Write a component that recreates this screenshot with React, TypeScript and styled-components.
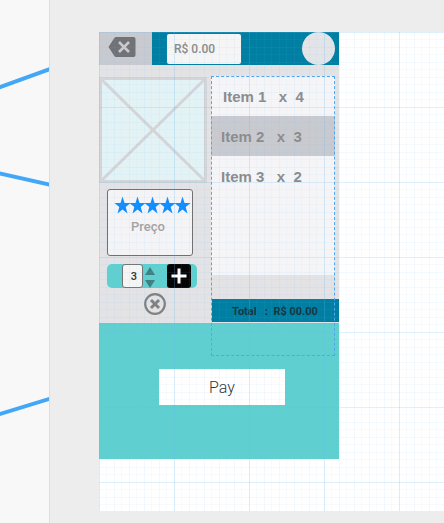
import React from "react";
import styled, { createGlobalStyle } from "styled-components";

const GlobalStyle = createGlobalStyle`
  *, *::before, *::after { box-sizing: border-box; }
  body { margin: 0; background: #ededed; font-family: Roboto, sans-serif; }
  button, input { font: inherit; margin: 0; padding: 0; border: 0; border-radius: 0; }
  button { cursor: pointer; background: none; }
  svg { display: block; }
`;

const Workspace = styled.div`
  display: flex;
  min-height: 100vh;
  overflow: hidden;
`;

const FlowStrip = styled.aside`
  flex: 0 0 50px;
  overflow: hidden;
  background: #f8f8f8;
  border-right: 1px solid #dedede;
`;

const Canvas = styled.main`
  flex: 1;
  min-width: 0;
  padding: 32px 0 12px 49px;
`;

const line = (alpha: number) => `rgba(100, 182, 240, ${alpha})`;

const Artboard = styled.div`
  position: relative;
  padding-bottom: 52px;
  background: #fff;

  &::after {
    content: "";
    position: absolute;
    inset: 0;
    pointer-events: none;
    background-image:
      linear-gradient(to right, ${line(0.18)} 1px, transparent 1px),
      linear-gradient(to bottom, ${line(0.14)} 1px, transparent 1px),
      linear-gradient(to right, ${line(0.08)} 1px, transparent 1px 7px, ${line(0.05)} 7px 8px, transparent 8px),
      linear-gradient(to bottom, ${line(0.08)} 1px, transparent 1px 7px, ${line(0.05)} 7px 8px, transparent 8px);
    background-size: 75px 75px, 75px 75px, 15px 15px, 15px 15px;
  }
`;

const Phone = styled.div`
  width: 100%;
  max-width: 240px;
  background: #e3e3e6;
`;

const Header = styled.header`
  display: flex;
  align-items: center;
  height: 33px;
  padding-right: 4px;
  background: #007fa3;
`;

const BackButton = styled.button`
  display: flex;
  align-items: center;
  align-self: stretch;
  width: 53px;
  padding: 0 0 3px 9px;
  background: #c9cad0;
`;

const BalanceInput = styled.input`
  width: 74px;
  height: 30px;
  margin-left: 15px;
  padding: 0 0 0 7px;
  border-radius: 2px;
  background: #f5f5f6;
  color: #8a8a8a;
  font-size: 12px;
  font-weight: 500;
`;

const Avatar = styled.button`
  width: 33px;
  height: 33px;
  margin-left: auto;
  border-radius: 50%;
  background: #e3e4e8;
`;

const Body = styled.section`
  display: grid;
  grid-template-columns: 112px 1fr;
`;

const ProductColumn = styled.div`
  display: flex;
  flex-direction: column;
  align-items: flex-start;
  padding: 12px 0 8px;
`;

const PriceCard = styled.div`
  width: 86px;
  height: 67px;
  margin: 6px 0 8px 8px;
  padding: 6px 0 0 6px;
  border: 1px solid #707070;
  border-radius: 3px;
  background: #f4f4f6;
`;

const PriceLabel = styled.div`
  margin-top: 4px;
  padding-right: 10px;
  text-align: center;
  color: #a3a3a3;
  font-size: 13px;
  font-weight: 500;
  line-height: 16px;
`;

const QuantityBar = styled.div`
  display: flex;
  align-items: center;
  width: 90px;
  height: 24px;
  margin: 0 0 5px 8px;
  padding: 0 6px 0 15px;
  border-radius: 5px;
  background: #5fd0cf;
`;

const QuantityInput = styled.input`
  width: 21px;
  height: 24px;
  padding-left: 3px;
  border: 1px solid #737373;
  border-radius: 3px;
  background: #f5f5f6;
  color: #333;
  text-align: center;
  font-size: 11px;
  font-weight: 500;
`;

const Stepper = styled.div`
  display: flex;
  flex-direction: column;
  gap: 5px;
  margin: 3px 0 0 2px;
`;

const StepButton = styled.button`
  height: 8px;
`;

const AddButton = styled.button`
  display: grid;
  place-items: center;
  width: 24px;
  height: 24px;
  margin-left: auto;
  border-radius: 3px;
  background: #050505;
`;

const RemoveButton = styled.button`
  margin-left: 45px;
`;

const OrderColumn = styled.div`
  position: relative;
  display: flex;
  flex-direction: column;
  justify-content: space-between;
  padding: 11px 0 1px;
`;

const ItemList = styled.ul`
  min-height: 199px;
  margin: 0 4px 0 0;
  padding: 0;
  list-style: none;
  background: #f5f5f7;
`;

const Item = styled.li<{ $selected?: boolean }>`
  height: 40px;
  padding-left: 10px;
  background: ${(p) => (p.$selected ? "#c9cad0" : "transparent")};
  color: #8c8c8c;
  font-family: "Liberation Sans", sans-serif;
  font-size: 15px;
  font-weight: 700;
  line-height: 42px;
  white-space: pre;

  &:first-child {
    padding-left: 12px;
  }
`;

const Total = styled.div`
  height: 23px;
  margin-left: 1px;
  padding-left: 20px;
  background: #007fa3;
  color: #17343f;
  font-size: 11px;
  font-weight: 700;
  line-height: 25px;
  white-space: pre;
`;

const SelectionOutline = styled.div`
  position: absolute;
  inset: 11px 4px -33px 0;
  border: 1px dashed #52a6ee;
  pointer-events: none;
`;

const Checkout = styled.footer`
  display: flex;
  justify-content: center;
  padding: 46px 0 54px;
  background: #5fd0cf;
`;

const PayButton = styled.button`
  width: 126px;
  height: 36px;
  margin-left: 6px;
  background: #fff;
  color: #333;
  font-size: 16px;
  font-weight: 300;
`;

const items = [
  { name: "Item 1", count: 4 },
  { name: "Item 2", count: 3, selected: true },
  { name: "Item 3", count: 2 },
];

const Connectors = () => (
  <svg width="49" height="523" stroke="#42a7f7" strokeWidth="4" aria-hidden="true">
    <path d="M-4 88.500L53 68M-4 172.600L53 185.400M-4 415.200L53 397.800" />
  </svg>
);

const BackspaceIcon = () => (
  <svg width="28" height="22" viewBox="0 0 28 22" aria-hidden="true">
    <path d="M8 1H25.500Q27.500 1 27.500 3V19Q27.500 21 25.500 21H8Q7 21 6.300 20L0.500 11L6.300 2Q7 1 8 1Z" fill="#717275" />
    <path d="M11 6L21 16M21 6L11 16" stroke="#c9cad0" strokeWidth="2.600" />
  </svg>
);

const ImagePlaceholder = () => (
  <svg width="108" height="106" viewBox="0 0 108 106" role="img" aria-label="Product image">
    <rect x="1.500" y="1.500" width="105" height="103" fill="#e3f3f5" stroke="#d5d5d8" strokeWidth="3" />
    <path d="M2 2L106 104M106 2L2 104" stroke="#d5d5d8" strokeWidth="3" />
  </svg>
);

const Stars = () => (
  <svg width="78" height="19" viewBox="0 0 78 19" fill="#118dff" role="img" aria-label="5 stars">
    {[0, 15, 30, 45, 60].map((x) => (
      <path
        key={x}
        transform={`translate(${x} 0)`}
        d="M8.500 .5L10.500 7H16.500L11.700 11L13.500 17.500L8.500 13.600L3.500 17.500L5.300 11L.5 7H6.500Z"
      />
    ))}
  </svg>
);

const Arrow = ({ down }: { down?: boolean }) => (
  <svg width="10" height="8" viewBox="0 0 10 8" fill="#3f8080" aria-hidden="true">
    <path d={down ? "M0 0H10L5 8Z" : "M0 8H10L5 0Z"} />
  </svg>
);

const PlusIcon = () => (
  <svg width="16" height="16" viewBox="0 0 16 16" stroke="#fff" strokeWidth="3" aria-hidden="true">
    <path d="M8 .5V15.500M.5 8H15.500" />
  </svg>
);

const CloseIcon = () => (
  <svg width="22" height="22" viewBox="0 0 22 22" fill="none" stroke="#808082" aria-hidden="true">
    <circle cx="11" cy="11" r="9.800" strokeWidth="2.200" />
    <path d="M7 7L15 15M15 7L7 15" strokeWidth="3" />
  </svg>
);

export default function App() {
  return (
    <>
      <GlobalStyle />
      <Workspace>
        <FlowStrip>
          <Connectors />
        </FlowStrip>
        <Canvas>
          <Artboard>
            <Phone>
              <Header>
                <BackButton aria-label="Back">
                  <BackspaceIcon />
                </BackButton>
                <BalanceInput aria-label="Balance" defaultValue="R$ 0.00" />
                <Avatar aria-label="Profile" />
              </Header>
              <Body>
                <ProductColumn>
                  <ImagePlaceholder />
                  <PriceCard>
                    <Stars />
                    <PriceLabel>Preço</PriceLabel>
                  </PriceCard>
                  <QuantityBar>
                    <QuantityInput aria-label="Quantity" defaultValue="3" />
                    <Stepper>
                      <StepButton aria-label="Increase">
                        <Arrow />
                      </StepButton>
                      <StepButton aria-label="Decrease">
                        <Arrow down />
                      </StepButton>
                    </Stepper>
                    <AddButton aria-label="Add">
                      <PlusIcon />
                    </AddButton>
                  </QuantityBar>
                  <RemoveButton aria-label="Remove">
                    <CloseIcon />
                  </RemoveButton>
                </ProductColumn>
                <OrderColumn>
                  <ItemList>
                    {items.map((item) => (
                      <Item key={item.name} $selected={item.selected}>
                        {`${item.name}   x  ${item.count}`}
                      </Item>
                    ))}
                  </ItemList>
                  <Total>{"Total   :  R$ 00.00"}</Total>
                  <SelectionOutline />
                </OrderColumn>
              </Body>
              <Checkout>
                <PayButton>Pay</PayButton>
              </Checkout>
            </Phone>
          </Artboard>
        </Canvas>
      </Workspace>
    </>
  );
}
